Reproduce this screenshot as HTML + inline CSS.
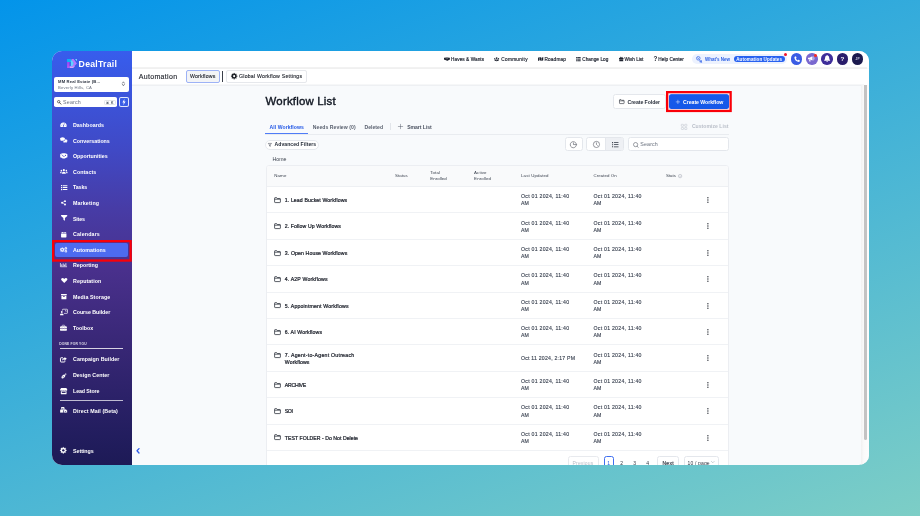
<!DOCTYPE html>
<html><head><meta charset="utf-8"><title>Workflow List</title>
<style>
html,body{margin:0;padding:0;}
body{width:920px;height:516px;overflow:hidden;position:relative;font-family:"Liberation Sans",sans-serif;
background:linear-gradient(160deg,#0394EA 0%,#7DCEC6 100%);}
#win{position:absolute;left:51.5px;top:51px;width:817.3px;height:413.6px;border-radius:10px;overflow:hidden;background:#F8FAFC;}
#pg{position:absolute;left:-51.5px;top:-51px;width:920px;height:516px;will-change:transform;filter:blur(0.3px);}
#pg div,#pg span,#pg svg{position:absolute;box-sizing:border-box;}
#pg span{white-space:nowrap;display:block;}
#pg svg{overflow:visible;display:block;}
</style></head>
<body>
<div id="win"><div id="pg">
<div style="left:51.00px;top:51.00px;width:81.00px;height:414.00px;background:linear-gradient(180deg,#375DED 0%,#4049C5 24%,#473CA6 38%,#49308C 53%,#3A2878 69%,#221D5E 93%,#1D1A56 100%);"></div>
<div style="left:132.00px;top:51.00px;width:737.00px;height:17.00px;background:#fff;"></div>
<div style="left:132.00px;top:67.00px;width:735.00px;height:1.00px;background:#F2F2F2;"></div>
<div style="left:132.00px;top:68.00px;width:735.00px;height:1.00px;background:#F0F0F0;"></div>
<div style="left:132.00px;top:69.00px;width:737.00px;height:16.00px;background:#fff;"></div>
<div style="left:132.00px;top:84.00px;width:732.00px;height:1.00px;background:#F6F7F8;"></div>
<div style="left:132.00px;top:85.00px;width:732.00px;height:1.00px;background:#EEF0F3;"></div>
<div style="left:861.00px;top:85.00px;width:8.00px;height:380.00px;background:linear-gradient(90deg,#F1F1F1 0%,#FAFAFA 35%,#FDFDFD 100%);"></div>
<div style="left:864.00px;top:85.20px;width:3.00px;height:354.60px;background:#C3C3C3;border-radius:0 0 1.5px 1.5px;"></div>
<div style="left:265.50px;top:164.60px;width:463.00px;height:305.40px;background:#fff;border:1px solid #ECEEF2;border-radius:3px;"></div>
<div style="left:266.50px;top:165.60px;width:461.00px;height:20.40px;background:#F9FAFB;border-radius:2px 2px 0 0;"></div>
<div style="left:266.50px;top:186.00px;width:461.00px;height:1.00px;background:#EEF0F3;"></div>
<div style="left:266.50px;top:212.00px;width:461.00px;height:1.00px;background:#F0F2F5;"></div>
<div style="left:266.50px;top:239.00px;width:461.00px;height:1.00px;background:#F0F2F5;"></div>
<div style="left:266.50px;top:265.00px;width:461.00px;height:1.00px;background:#F0F2F5;"></div>
<div style="left:266.50px;top:292.00px;width:461.00px;height:1.00px;background:#F0F2F5;"></div>
<div style="left:266.50px;top:318.00px;width:461.00px;height:1.00px;background:#F0F2F5;"></div>
<div style="left:266.50px;top:344.00px;width:461.00px;height:1.00px;background:#F0F2F5;"></div>
<div style="left:266.50px;top:371.00px;width:461.00px;height:1.00px;background:#F0F2F5;"></div>
<div style="left:266.50px;top:397.00px;width:461.00px;height:1.00px;background:#F0F2F5;"></div>
<div style="left:266.50px;top:424.00px;width:461.00px;height:1.00px;background:#F0F2F5;"></div>
<div style="left:266.50px;top:450.00px;width:461.00px;height:1.00px;background:#F0F2F5;"></div>
<svg style="left:66.90px;top:58.90px;" width="10.00" height="9.20" viewBox="0 0 100 92">
<defs><linearGradient id="lg1" x1="0" y1="0" x2="0" y2="1"><stop offset="0" stop-color="#A040F8"/><stop offset="1" stop-color="#B85CF2"/></linearGradient></defs>
<rect x="0" y="0" width="40" height="30" fill="#0AB2F6"/>
<rect x="1" y="30" width="24" height="60" fill="url(#lg1)"/>
<path d="M38 12 H60 L68 40 V70 H38 Z" fill="#62D0FF"/>
<path d="M42 0 H66 L99 46 L68 78 L54 64 L70 46 Z" fill="#B27AFF"/>
<path d="M80 0 H100 V22 Z" fill="#6FD6FF"/>
<path d="M26 72 H80 L62 90 H26 Z" fill="#D6A0FF"/>
</svg>
<span style="left:78.60px;top:59px;font-size:8.7px;line-height:10px;color:#fff;font-weight:700;letter-spacing:0.260px;">DealTrail</span>
<div style="left:54.20px;top:76.70px;width:74.80px;height:14.90px;background:#fff;border-radius:2px;"></div>
<span style="left:58.10px;top:79px;font-size:4.15px;line-height:5px;color:#2D3340;font-weight:700;letter-spacing:0.144px;">MM Real Estate (B...</span>
<span style="left:58.10px;top:85px;font-size:4.2px;line-height:5px;color:#6B7280;letter-spacing:0.163px;">Beverly Hills, CA</span>
<svg style="left:121.90px;top:80.90px;" width="2.80" height="5.60" viewBox="0 0 28 56"><path d="M4 22 L14 8 L24 22 M4 34 L14 48 L24 34" fill="none" stroke="#3A404C" stroke-width="6" stroke-linecap="round" stroke-linejoin="round"/></svg>
<div style="left:54.20px;top:97.30px;width:62.80px;height:10.00px;background:#fff;border-radius:1.8px;"></div>
<svg style="left:56.50px;top:100.00px;" width="4.40" height="4.60" viewBox="0 0 44 46"><circle cx="17" cy="17" r="12" fill="none" stroke="#333" stroke-width="7"/><path d="M26 27 L40 42" stroke="#333" stroke-width="8" stroke-linecap="round"/></svg>
<span style="left:63.00px;top:99px;font-size:5.3px;line-height:6px;color:#6B7280;letter-spacing:0.201px;">Search</span>
<div style="left:103.50px;top:99.70px;width:12.20px;height:5.60px;background:#fff;border:1px solid #E3E5E9;border-radius:1.2px;"></div>
<span style="left:105.70px;top:101px;font-size:3.4px;line-height:4px;color:#4B5563;font-weight:700;letter-spacing:0.747px;">&#8984; K</span>
<div style="left:118.80px;top:97.30px;width:10.20px;height:10.00px;background:#3A5EE6;border:1px solid rgba(255,255,255,0.85);border-radius:2px;"></div>
<svg style="left:121.90px;top:99.30px;" width="4.00" height="6.20" viewBox="0 0 40 62"><path d="M24 0 L4 34 H18 L12 62 L36 24 H22 Z" fill="#fff"/></svg>
<svg style="left:52.00px;top:240.20px;" width="79.80" height="21.70" viewBox="0 0 79.8 21.7"><rect x="1.15" y="1.15" width="77.5" height="19.4" fill="none" stroke="#FA0008" stroke-width="2.3"/></svg>
<div style="left:54.70px;top:243.00px;width:73.60px;height:14.20px;background:#4D6BF0;border-radius:2px;"></div>
<span style="left:73.00px;top:122px;font-size:5.3px;line-height:6px;color:#fff;font-weight:700;letter-spacing:0.042px;">Dashboards</span>
<span style="left:73.00px;top:138px;font-size:5.3px;line-height:6px;color:#fff;font-weight:700;">Conversations</span>
<span style="left:73.00px;top:153px;font-size:5.3px;line-height:6px;color:#fff;font-weight:700;letter-spacing:-0.011px;">Opportunities</span>
<span style="left:73.00px;top:169px;font-size:5.3px;line-height:6px;color:#fff;font-weight:700;letter-spacing:0.075px;">Contacts</span>
<span style="left:73.00px;top:184px;font-size:5.3px;line-height:6px;color:#fff;font-weight:700;letter-spacing:-0.110px;">Tasks</span>
<span style="left:73.00px;top:200px;font-size:5.3px;line-height:6px;color:#fff;font-weight:700;letter-spacing:0.121px;">Marketing</span>
<span style="left:73.00px;top:216px;font-size:5.3px;line-height:6px;color:#fff;font-weight:700;letter-spacing:-0.193px;">Sites</span>
<span style="left:73.00px;top:231px;font-size:5.3px;line-height:6px;color:#fff;font-weight:700;letter-spacing:0.147px;">Calendars</span>
<span style="left:73.00px;top:247px;font-size:5.3px;line-height:6px;color:#fff;font-weight:700;letter-spacing:0.042px;">Automations</span>
<span style="left:73.00px;top:262px;font-size:5.3px;line-height:6px;color:#fff;font-weight:700;letter-spacing:-0.014px;">Reporting</span>
<span style="left:73.00px;top:278px;font-size:5.3px;line-height:6px;color:#fff;font-weight:700;letter-spacing:0.059px;">Reputation</span>
<span style="left:73.00px;top:294px;font-size:5.3px;line-height:6px;color:#fff;font-weight:700;letter-spacing:0.082px;">Media Storage</span>
<span style="left:73.00px;top:309px;font-size:5.3px;line-height:6px;color:#fff;font-weight:700;letter-spacing:-0.059px;">Course Builder</span>
<span style="left:73.00px;top:325px;font-size:5.3px;line-height:6px;color:#fff;font-weight:700;letter-spacing:-0.017px;">Toolbox</span>
<span style="left:73.00px;top:356px;font-size:5.3px;line-height:6px;color:#fff;font-weight:700;letter-spacing:0.065px;">Campaign Builder</span>
<span style="left:73.00px;top:372px;font-size:5.3px;line-height:6px;color:#fff;font-weight:700;letter-spacing:0.032px;">Design Center</span>
<span style="left:73.00px;top:388px;font-size:5.3px;line-height:6px;color:#fff;font-weight:700;letter-spacing:-0.097px;">Lead Store</span>
<span style="left:73.00px;top:408px;font-size:5.3px;line-height:6px;color:#fff;font-weight:700;letter-spacing:0.095px;">Direct Mail (Beta)</span>
<span style="left:73.00px;top:448px;font-size:5.3px;line-height:6px;color:#fff;font-weight:700;letter-spacing:-0.029px;">Settings</span>
<span style="left:59.20px;top:342px;font-size:3.3px;line-height:4px;color:rgba(255,255,255,0.82);font-weight:700;letter-spacing:0.181px;">DONE FOR YOU</span>
<div style="left:59.60px;top:348.00px;width:63.70px;height:1.00px;background:rgba(255,255,255,0.8);"></div>
<div style="left:59.60px;top:400.00px;width:63.70px;height:1.00px;background:rgba(255,255,255,0.7);"></div>
<svg style="left:135.90px;top:447.90px;" width="4.00" height="5.60" viewBox="0 0 40 56"><path d="M30 6 L10 28 L30 50" fill="none" stroke="#2F5BEA" stroke-width="13" stroke-linecap="round" stroke-linejoin="round"/></svg>
<span style="left:451.10px;top:57px;font-size:4.7px;line-height:5px;color:#1F2430;letter-spacing:0.072px;-webkit-text-stroke:0.18px #1F2430;">Haves &amp; Wants</span>
<span style="left:501.30px;top:57px;font-size:4.7px;line-height:5px;color:#1F2430;letter-spacing:0.312px;-webkit-text-stroke:0.18px #1F2430;">Community</span>
<span style="left:544.40px;top:57px;font-size:4.7px;line-height:5px;color:#1F2430;letter-spacing:0.195px;-webkit-text-stroke:0.18px #1F2430;">Roadmap</span>
<span style="left:582.20px;top:57px;font-size:4.7px;line-height:5px;color:#1F2430;letter-spacing:0.073px;-webkit-text-stroke:0.18px #1F2430;">Change Log</span>
<span style="left:624.50px;top:57px;font-size:4.7px;line-height:5px;color:#1F2430;letter-spacing:-0.014px;-webkit-text-stroke:0.18px #1F2430;">Wish List</span>
<span style="left:658.30px;top:57px;font-size:4.7px;line-height:5px;color:#1F2430;letter-spacing:0.048px;-webkit-text-stroke:0.18px #1F2430;">Help Center</span>
<div style="left:691.80px;top:53.80px;width:95.00px;height:10.30px;background:#EDF2FE;border-radius:5.2px;"></div>
<span style="left:705.00px;top:57px;font-size:4.5px;line-height:5px;color:#2B5FE3;font-weight:700;letter-spacing:-0.009px;">What's New</span>
<div style="left:733.50px;top:55.70px;width:51.70px;height:6.80px;background:#2761F0;border-radius:3.4px;"></div>
<span style="left:736.20px;top:57px;font-size:4.5px;line-height:5px;color:#fff;font-weight:700;letter-spacing:0.105px;">Automation Updates</span>
<div style="left:784.30px;top:52.70px;width:3.00px;height:3.00px;background:#F0142B;border-radius:50%;"></div>
<div style="left:790.80px;top:53.05px;width:11.50px;height:11.50px;background:#3A5CE4;border-radius:50%;"></div>
<div style="left:806.05px;top:53.05px;width:11.50px;height:11.50px;background:#7A68CF;border-radius:50%;"></div>
<div style="left:821.30px;top:53.05px;width:11.50px;height:11.50px;background:#3E2E9A;border-radius:50%;"></div>
<div style="left:836.55px;top:53.05px;width:11.50px;height:11.50px;background:#2A1D6B;border-radius:50%;"></div>
<div style="left:851.85px;top:53.05px;width:11.50px;height:11.50px;background:#1C1A4E;border-radius:50%;"></div>
<div style="left:813.65px;top:53.55px;width:3.70px;height:3.70px;background:#FF2A1F;border-radius:50%;"></div>
<span style="left:840.50px;top:55px;font-size:6.2px;line-height:7px;color:#fff;font-weight:700;">?</span>
<span style="left:855.60px;top:57px;font-size:3.2px;line-height:4px;color:#C9C9E2;font-weight:700;letter-spacing:0.194px;">JP</span>
<span style="left:138.70px;top:73px;font-size:7.0px;line-height:7px;color:#23262E;letter-spacing:0.331px;-webkit-text-stroke:0.12px #23262E;">Automation</span>
<div style="left:185.80px;top:69.80px;width:33.80px;height:12.80px;background:#F3F4F6;border:1px solid #9DB2F6;border-radius:2px;"></div>
<span style="left:189.90px;top:73px;font-size:5.2px;line-height:6px;color:#23262E;letter-spacing:0.196px;-webkit-text-stroke:0.12px #23262E;">Workflows</span>
<div style="left:222.40px;top:71.20px;width:1.00px;height:10.40px;background:#3A3F49;"></div>
<div style="left:226.20px;top:69.80px;width:80.40px;height:12.80px;background:#fff;border:1px solid #E6E8EC;border-radius:2px;"></div>
<span style="left:239.00px;top:73px;font-size:5.2px;line-height:6px;color:#23262E;letter-spacing:0.224px;-webkit-text-stroke:0.12px #23262E;">Global Workflow Settings</span>
<span style="left:265.60px;top:95px;font-size:11.4px;line-height:12px;color:#111722;letter-spacing:0.207px;-webkit-text-stroke:0.4px #111722;">Workflow List</span>
<div style="left:613.40px;top:94.30px;width:52.70px;height:14.90px;background:#fff;border:1px solid #E4E7EC;border-radius:2.5px;"></div>
<span style="left:627.50px;top:99px;font-size:5.2px;line-height:6px;color:#2B313D;font-weight:700;letter-spacing:-0.071px;">Create Folder</span>
<svg style="left:666.00px;top:91.10px;" width="65.80" height="21.10" viewBox="0 0 65.8 21.1"><rect x="1.15" y="1.15" width="63.5" height="18.8" fill="none" stroke="#FA0008" stroke-width="2.3"/></svg>
<div style="left:668.90px;top:94.10px;width:60.20px;height:14.80px;background:linear-gradient(180deg,#3F86F4 0%,#1659EA 9%,#1558E8 100%);border-radius:2.5px;"></div>
<span style="left:683.00px;top:99px;font-size:5.2px;line-height:6px;color:#fff;font-weight:700;letter-spacing:-0.039px;">Create Workflow</span>
<div style="left:265.30px;top:133.50px;width:463.30px;height:1.00px;background:#E9ECF0;"></div>
<div style="left:265.30px;top:132.60px;width:43.00px;height:1.40px;background:#4F7CF7;"></div>
<span style="left:269.50px;top:124px;font-size:5.1px;line-height:6px;color:#2257E6;font-weight:700;letter-spacing:0.067px;">All Workflows</span>
<span style="left:312.80px;top:124px;font-size:5.1px;line-height:6px;color:#5B6270;font-weight:700;letter-spacing:0.060px;">Needs Review (0)</span>
<span style="left:364.50px;top:124px;font-size:5.1px;line-height:6px;color:#5B6270;font-weight:700;letter-spacing:0.016px;">Deleted</span>
<div style="left:390.30px;top:123.20px;width:1.00px;height:7.20px;background:#E2E5EA;"></div>
<span style="left:407.20px;top:124px;font-size:5.1px;line-height:6px;color:#4A5160;font-weight:700;letter-spacing:-0.036px;">Smart List</span>
<span style="left:691.90px;top:123px;font-size:5.1px;line-height:6px;color:#B9BEC8;font-weight:700;letter-spacing:0.028px;">Customize List</span>
<div style="left:265.30px;top:139.70px;width:54.10px;height:9.90px;background:#fff;border:1px solid #E6E9EE;border-radius:5px;"></div>
<span style="left:274.60px;top:141px;font-size:5.1px;line-height:6px;color:#1F2633;font-weight:700;letter-spacing:0.030px;">Advanced Filters</span>
<div style="left:564.50px;top:137.20px;width:18.20px;height:14.30px;background:#fff;border:1px solid #E4E7EC;border-radius:2.5px;"></div>
<div style="left:586.40px;top:137.20px;width:38.10px;height:14.30px;background:#fff;border:1px solid #E4E7EC;border-radius:2.5px;"></div>
<div style="left:605.40px;top:138.20px;width:18.10px;height:12.30px;background:#EEF0F4;border-left:1px solid #E4E7EC;border-radius:0 1.5px 1.5px 0;"></div>
<div style="left:628.10px;top:137.20px;width:100.50px;height:14.30px;background:#fff;border:1px solid #E4E7EC;border-radius:2.5px;"></div>
<span style="left:640.30px;top:141px;font-size:5.3px;line-height:6px;color:#69707D;letter-spacing:0.141px;">Search</span>
<span style="left:272.60px;top:156px;font-size:5.2px;line-height:6px;color:#3A404C;letter-spacing:-0.015px;">Home</span>
<span style="left:274.20px;top:173px;font-size:4.4px;line-height:5px;color:#3C4350;letter-spacing:0.160px;">Name</span>
<span style="left:395.00px;top:173px;font-size:4.4px;line-height:5px;color:#3C4350;letter-spacing:0.069px;">Status</span>
<span style="left:430.30px;top:170px;font-size:4.4px;line-height:5px;color:#3C4350;letter-spacing:0.08px;">Total</span>
<span style="left:430.30px;top:176px;font-size:4.4px;line-height:5px;color:#3C4350;letter-spacing:0.056px;">Enrolled</span>
<span style="left:474.10px;top:170px;font-size:4.4px;line-height:5px;color:#3C4350;letter-spacing:0.08px;">Active</span>
<span style="left:474.10px;top:176px;font-size:4.4px;line-height:5px;color:#3C4350;letter-spacing:0.113px;">Enrolled</span>
<span style="left:521.00px;top:173px;font-size:4.4px;line-height:5px;color:#3C4350;letter-spacing:0.125px;">Last Updated</span>
<span style="left:593.50px;top:173px;font-size:4.4px;line-height:5px;color:#3C4350;letter-spacing:0.066px;">Created On</span>
<span style="left:666.00px;top:173px;font-size:4.4px;line-height:5px;color:#3C4350;letter-spacing:-0.029px;">Stats</span>
<svg style="left:678.00px;top:173.50px;" width="4.20" height="4.20" viewBox="0 0 42 42"><circle cx="21" cy="21" r="17" fill="none" stroke="#8A919E" stroke-width="4"/><path d="M21 19 V30 M21 12 V14" stroke="#8A919E" stroke-width="4"/></svg>
<svg style="left:274.30px;top:196.70px;" width="7.00" height="6.20" viewBox="0 0 70 62"><path d="M6 50 V12 Q6 6 12 6 H26 L33 15 H58 Q64 15 64 21 V50 Q64 56 58 56 H12 Q6 56 6 50 Z M6 22 H64" fill="none" stroke="#262B36" stroke-width="7.5" stroke-linejoin="round"/></svg>
<span style="left:284.80px;top:197px;font-size:5.2px;line-height:6px;color:#20242E;letter-spacing:0.105px;-webkit-text-stroke:0.22px #20242E;">1. Lead Bucket Workflows</span>
<span style="left:521.00px;top:193px;font-size:5.2px;line-height:6px;color:#394150;letter-spacing:0.256px;-webkit-text-stroke:0.12px #394150;">Oct 01 2024, 11:40</span>
<span style="left:521.00px;top:200px;font-size:5.2px;line-height:6px;color:#394150;letter-spacing:-0.081px;-webkit-text-stroke:0.12px #394150;">AM</span>
<span style="left:593.50px;top:193px;font-size:5.2px;line-height:6px;color:#394150;letter-spacing:0.250px;-webkit-text-stroke:0.12px #394150;">Oct 01 2024, 11:40</span>
<span style="left:593.50px;top:200px;font-size:5.2px;line-height:6px;color:#394150;letter-spacing:-0.081px;-webkit-text-stroke:0.12px #394150;">AM</span>
<svg style="left:706.60px;top:197.00px;" width="1.80" height="6.00" viewBox="0 0 18 60"><g fill="#1C2029"><circle cx="9" cy="7.5" r="6.4"/><circle cx="9" cy="30" r="6.4"/><circle cx="9" cy="52.5" r="6.4"/></g></svg>
<svg style="left:274.30px;top:223.10px;" width="7.00" height="6.20" viewBox="0 0 70 62"><path d="M6 50 V12 Q6 6 12 6 H26 L33 15 H58 Q64 15 64 21 V50 Q64 56 58 56 H12 Q6 56 6 50 Z M6 22 H64" fill="none" stroke="#262B36" stroke-width="7.5" stroke-linejoin="round"/></svg>
<span style="left:284.80px;top:223px;font-size:5.2px;line-height:6px;color:#20242E;letter-spacing:0.095px;-webkit-text-stroke:0.22px #20242E;">2. Follow Up Workflows</span>
<span style="left:521.00px;top:220px;font-size:5.2px;line-height:6px;color:#394150;letter-spacing:0.256px;-webkit-text-stroke:0.12px #394150;">Oct 01 2024, 11:40</span>
<span style="left:521.00px;top:227px;font-size:5.2px;line-height:6px;color:#394150;letter-spacing:-0.081px;-webkit-text-stroke:0.12px #394150;">AM</span>
<span style="left:593.50px;top:220px;font-size:5.2px;line-height:6px;color:#394150;letter-spacing:0.250px;-webkit-text-stroke:0.12px #394150;">Oct 01 2024, 11:40</span>
<span style="left:593.50px;top:227px;font-size:5.2px;line-height:6px;color:#394150;letter-spacing:-0.081px;-webkit-text-stroke:0.12px #394150;">AM</span>
<svg style="left:706.60px;top:223.40px;" width="1.80" height="6.00" viewBox="0 0 18 60"><g fill="#1C2029"><circle cx="9" cy="7.5" r="6.4"/><circle cx="9" cy="30" r="6.4"/><circle cx="9" cy="52.5" r="6.4"/></g></svg>
<svg style="left:274.30px;top:249.50px;" width="7.00" height="6.20" viewBox="0 0 70 62"><path d="M6 50 V12 Q6 6 12 6 H26 L33 15 H58 Q64 15 64 21 V50 Q64 56 58 56 H12 Q6 56 6 50 Z M6 22 H64" fill="none" stroke="#262B36" stroke-width="7.5" stroke-linejoin="round"/></svg>
<span style="left:284.80px;top:250px;font-size:5.2px;line-height:6px;color:#20242E;letter-spacing:0.106px;-webkit-text-stroke:0.22px #20242E;">3. Open House Workflows</span>
<span style="left:521.00px;top:246px;font-size:5.2px;line-height:6px;color:#394150;letter-spacing:0.256px;-webkit-text-stroke:0.12px #394150;">Oct 01 2024, 11:40</span>
<span style="left:521.00px;top:253px;font-size:5.2px;line-height:6px;color:#394150;letter-spacing:-0.081px;-webkit-text-stroke:0.12px #394150;">AM</span>
<span style="left:593.50px;top:246px;font-size:5.2px;line-height:6px;color:#394150;letter-spacing:0.250px;-webkit-text-stroke:0.12px #394150;">Oct 01 2024, 11:40</span>
<span style="left:593.50px;top:253px;font-size:5.2px;line-height:6px;color:#394150;letter-spacing:-0.081px;-webkit-text-stroke:0.12px #394150;">AM</span>
<svg style="left:706.60px;top:249.80px;" width="1.80" height="6.00" viewBox="0 0 18 60"><g fill="#1C2029"><circle cx="9" cy="7.5" r="6.4"/><circle cx="9" cy="30" r="6.4"/><circle cx="9" cy="52.5" r="6.4"/></g></svg>
<svg style="left:274.30px;top:275.90px;" width="7.00" height="6.20" viewBox="0 0 70 62"><path d="M6 50 V12 Q6 6 12 6 H26 L33 15 H58 Q64 15 64 21 V50 Q64 56 58 56 H12 Q6 56 6 50 Z M6 22 H64" fill="none" stroke="#262B36" stroke-width="7.5" stroke-linejoin="round"/></svg>
<span style="left:284.80px;top:276px;font-size:5.2px;line-height:6px;color:#20242E;letter-spacing:0.149px;-webkit-text-stroke:0.22px #20242E;">4. A2P Workflows</span>
<span style="left:521.00px;top:272px;font-size:5.2px;line-height:6px;color:#394150;letter-spacing:0.256px;-webkit-text-stroke:0.12px #394150;">Oct 01 2024, 11:40</span>
<span style="left:521.00px;top:280px;font-size:5.2px;line-height:6px;color:#394150;letter-spacing:-0.081px;-webkit-text-stroke:0.12px #394150;">AM</span>
<span style="left:593.50px;top:272px;font-size:5.2px;line-height:6px;color:#394150;letter-spacing:0.250px;-webkit-text-stroke:0.12px #394150;">Oct 01 2024, 11:40</span>
<span style="left:593.50px;top:280px;font-size:5.2px;line-height:6px;color:#394150;letter-spacing:-0.081px;-webkit-text-stroke:0.12px #394150;">AM</span>
<svg style="left:706.60px;top:276.20px;" width="1.80" height="6.00" viewBox="0 0 18 60"><g fill="#1C2029"><circle cx="9" cy="7.5" r="6.4"/><circle cx="9" cy="30" r="6.4"/><circle cx="9" cy="52.5" r="6.4"/></g></svg>
<svg style="left:274.30px;top:302.30px;" width="7.00" height="6.20" viewBox="0 0 70 62"><path d="M6 50 V12 Q6 6 12 6 H26 L33 15 H58 Q64 15 64 21 V50 Q64 56 58 56 H12 Q6 56 6 50 Z M6 22 H64" fill="none" stroke="#262B36" stroke-width="7.5" stroke-linejoin="round"/></svg>
<span style="left:284.80px;top:303px;font-size:5.2px;line-height:6px;color:#20242E;letter-spacing:0.166px;-webkit-text-stroke:0.22px #20242E;">5. Appointment Workflows</span>
<span style="left:521.00px;top:299px;font-size:5.2px;line-height:6px;color:#394150;letter-spacing:0.256px;-webkit-text-stroke:0.12px #394150;">Oct 01 2024, 11:40</span>
<span style="left:521.00px;top:306px;font-size:5.2px;line-height:6px;color:#394150;letter-spacing:-0.081px;-webkit-text-stroke:0.12px #394150;">AM</span>
<span style="left:593.50px;top:299px;font-size:5.2px;line-height:6px;color:#394150;letter-spacing:0.250px;-webkit-text-stroke:0.12px #394150;">Oct 01 2024, 11:40</span>
<span style="left:593.50px;top:306px;font-size:5.2px;line-height:6px;color:#394150;letter-spacing:-0.081px;-webkit-text-stroke:0.12px #394150;">AM</span>
<svg style="left:706.60px;top:302.60px;" width="1.80" height="6.00" viewBox="0 0 18 60"><g fill="#1C2029"><circle cx="9" cy="7.5" r="6.4"/><circle cx="9" cy="30" r="6.4"/><circle cx="9" cy="52.5" r="6.4"/></g></svg>
<svg style="left:274.30px;top:328.70px;" width="7.00" height="6.20" viewBox="0 0 70 62"><path d="M6 50 V12 Q6 6 12 6 H26 L33 15 H58 Q64 15 64 21 V50 Q64 56 58 56 H12 Q6 56 6 50 Z M6 22 H64" fill="none" stroke="#262B36" stroke-width="7.5" stroke-linejoin="round"/></svg>
<span style="left:284.80px;top:329px;font-size:5.2px;line-height:6px;color:#20242E;letter-spacing:0.110px;-webkit-text-stroke:0.22px #20242E;">6. AI Workflows</span>
<span style="left:521.00px;top:325px;font-size:5.2px;line-height:6px;color:#394150;letter-spacing:0.256px;-webkit-text-stroke:0.12px #394150;">Oct 01 2024, 11:40</span>
<span style="left:521.00px;top:332px;font-size:5.2px;line-height:6px;color:#394150;letter-spacing:-0.081px;-webkit-text-stroke:0.12px #394150;">AM</span>
<span style="left:593.50px;top:325px;font-size:5.2px;line-height:6px;color:#394150;letter-spacing:0.250px;-webkit-text-stroke:0.12px #394150;">Oct 01 2024, 11:40</span>
<span style="left:593.50px;top:332px;font-size:5.2px;line-height:6px;color:#394150;letter-spacing:-0.081px;-webkit-text-stroke:0.12px #394150;">AM</span>
<svg style="left:706.60px;top:329.00px;" width="1.80" height="6.00" viewBox="0 0 18 60"><g fill="#1C2029"><circle cx="9" cy="7.5" r="6.4"/><circle cx="9" cy="30" r="6.4"/><circle cx="9" cy="52.5" r="6.4"/></g></svg>
<svg style="left:274.30px;top:351.60px;" width="7.00" height="6.20" viewBox="0 0 70 62"><path d="M6 50 V12 Q6 6 12 6 H26 L33 15 H58 Q64 15 64 21 V50 Q64 56 58 56 H12 Q6 56 6 50 Z M6 22 H64" fill="none" stroke="#262B36" stroke-width="7.5" stroke-linejoin="round"/></svg>
<span style="left:284.80px;top:352px;font-size:5.2px;line-height:6px;color:#20242E;letter-spacing:0.246px;-webkit-text-stroke:0.22px #20242E;">7. Agent-to-Agent Outreach</span>
<span style="left:284.80px;top:359px;font-size:5.2px;line-height:6px;color:#20242E;-webkit-text-stroke:0.22px #20242E;letter-spacing:0.1px;">Workflows</span>
<span style="left:521.00px;top:355px;font-size:5.2px;line-height:6px;color:#394150;letter-spacing:0.206px;-webkit-text-stroke:0.12px #394150;">Oct 11 2024, 2:17 PM</span>
<span style="left:593.50px;top:352px;font-size:5.2px;line-height:6px;color:#394150;letter-spacing:0.250px;-webkit-text-stroke:0.12px #394150;">Oct 01 2024, 11:40</span>
<span style="left:593.50px;top:359px;font-size:5.2px;line-height:6px;color:#394150;letter-spacing:-0.081px;-webkit-text-stroke:0.12px #394150;">AM</span>
<svg style="left:706.60px;top:355.40px;" width="1.80" height="6.00" viewBox="0 0 18 60"><g fill="#1C2029"><circle cx="9" cy="7.5" r="6.4"/><circle cx="9" cy="30" r="6.4"/><circle cx="9" cy="52.5" r="6.4"/></g></svg>
<svg style="left:274.30px;top:381.50px;" width="7.00" height="6.20" viewBox="0 0 70 62"><path d="M6 50 V12 Q6 6 12 6 H26 L33 15 H58 Q64 15 64 21 V50 Q64 56 58 56 H12 Q6 56 6 50 Z M6 22 H64" fill="none" stroke="#262B36" stroke-width="7.5" stroke-linejoin="round"/></svg>
<span style="left:284.80px;top:382px;font-size:5.2px;line-height:6px;color:#20242E;letter-spacing:-0.277px;-webkit-text-stroke:0.22px #20242E;">ARCHIVE</span>
<span style="left:521.00px;top:378px;font-size:5.2px;line-height:6px;color:#394150;letter-spacing:0.256px;-webkit-text-stroke:0.12px #394150;">Oct 01 2024, 11:40</span>
<span style="left:521.00px;top:385px;font-size:5.2px;line-height:6px;color:#394150;letter-spacing:-0.081px;-webkit-text-stroke:0.12px #394150;">AM</span>
<span style="left:593.50px;top:378px;font-size:5.2px;line-height:6px;color:#394150;letter-spacing:0.250px;-webkit-text-stroke:0.12px #394150;">Oct 01 2024, 11:40</span>
<span style="left:593.50px;top:385px;font-size:5.2px;line-height:6px;color:#394150;letter-spacing:-0.081px;-webkit-text-stroke:0.12px #394150;">AM</span>
<svg style="left:706.60px;top:381.80px;" width="1.80" height="6.00" viewBox="0 0 18 60"><g fill="#1C2029"><circle cx="9" cy="7.5" r="6.4"/><circle cx="9" cy="30" r="6.4"/><circle cx="9" cy="52.5" r="6.4"/></g></svg>
<svg style="left:274.30px;top:407.90px;" width="7.00" height="6.20" viewBox="0 0 70 62"><path d="M6 50 V12 Q6 6 12 6 H26 L33 15 H58 Q64 15 64 21 V50 Q64 56 58 56 H12 Q6 56 6 50 Z M6 22 H64" fill="none" stroke="#262B36" stroke-width="7.5" stroke-linejoin="round"/></svg>
<span style="left:284.80px;top:408px;font-size:5.2px;line-height:6px;color:#20242E;letter-spacing:-0.419px;-webkit-text-stroke:0.22px #20242E;">SOI</span>
<span style="left:521.00px;top:404px;font-size:5.2px;line-height:6px;color:#394150;letter-spacing:0.256px;-webkit-text-stroke:0.12px #394150;">Oct 01 2024, 11:40</span>
<span style="left:521.00px;top:412px;font-size:5.2px;line-height:6px;color:#394150;letter-spacing:-0.081px;-webkit-text-stroke:0.12px #394150;">AM</span>
<span style="left:593.50px;top:404px;font-size:5.2px;line-height:6px;color:#394150;letter-spacing:0.250px;-webkit-text-stroke:0.12px #394150;">Oct 01 2024, 11:40</span>
<span style="left:593.50px;top:412px;font-size:5.2px;line-height:6px;color:#394150;letter-spacing:-0.081px;-webkit-text-stroke:0.12px #394150;">AM</span>
<svg style="left:706.60px;top:408.20px;" width="1.80" height="6.00" viewBox="0 0 18 60"><g fill="#1C2029"><circle cx="9" cy="7.5" r="6.4"/><circle cx="9" cy="30" r="6.4"/><circle cx="9" cy="52.5" r="6.4"/></g></svg>
<svg style="left:274.30px;top:434.30px;" width="7.00" height="6.20" viewBox="0 0 70 62"><path d="M6 50 V12 Q6 6 12 6 H26 L33 15 H58 Q64 15 64 21 V50 Q64 56 58 56 H12 Q6 56 6 50 Z M6 22 H64" fill="none" stroke="#262B36" stroke-width="7.5" stroke-linejoin="round"/></svg>
<span style="left:284.80px;top:435px;font-size:5.2px;line-height:6px;color:#20242E;letter-spacing:0.014px;-webkit-text-stroke:0.22px #20242E;">TEST FOLDER - Do Not Delete</span>
<span style="left:521.00px;top:431px;font-size:5.2px;line-height:6px;color:#394150;letter-spacing:0.256px;-webkit-text-stroke:0.12px #394150;">Oct 01 2024, 11:40</span>
<span style="left:521.00px;top:438px;font-size:5.2px;line-height:6px;color:#394150;letter-spacing:-0.081px;-webkit-text-stroke:0.12px #394150;">AM</span>
<span style="left:593.50px;top:431px;font-size:5.2px;line-height:6px;color:#394150;letter-spacing:0.250px;-webkit-text-stroke:0.12px #394150;">Oct 01 2024, 11:40</span>
<span style="left:593.50px;top:438px;font-size:5.2px;line-height:6px;color:#394150;letter-spacing:-0.081px;-webkit-text-stroke:0.12px #394150;">AM</span>
<svg style="left:706.60px;top:434.60px;" width="1.80" height="6.00" viewBox="0 0 18 60"><g fill="#1C2029"><circle cx="9" cy="7.5" r="6.4"/><circle cx="9" cy="30" r="6.4"/><circle cx="9" cy="52.5" r="6.4"/></g></svg>
<div style="left:567.80px;top:456.00px;width:30.90px;height:14.00px;background:#fff;border:1px solid #E8EAEE;border-radius:2.5px;"></div>
<span style="left:572.60px;top:460px;font-size:5.0px;line-height:6px;color:#B7BCC6;letter-spacing:0.164px;">Previous</span>
<div style="left:603.50px;top:456.00px;width:10.40px;height:14.00px;background:#fff;border:1px solid #3F6FF0;border-radius:2.5px;"></div>
<span style="left:607.30px;top:460px;font-size:5.0px;line-height:6px;color:#2257E6;">1</span>
<span style="left:620.20px;top:460px;font-size:5.0px;line-height:6px;color:#2E3440;">2</span>
<span style="left:633.30px;top:460px;font-size:5.0px;line-height:6px;color:#2E3440;">3</span>
<span style="left:646.30px;top:460px;font-size:5.0px;line-height:6px;color:#2E3440;">4</span>
<div style="left:657.40px;top:456.00px;width:21.30px;height:14.00px;background:#fff;border:1px solid #E4E7EC;border-radius:2.5px;"></div>
<span style="left:662.40px;top:460px;font-size:5.0px;line-height:6px;color:#2E3440;letter-spacing:0.306px;-webkit-text-stroke:0.15px #2E3440;">Next</span>
<div style="left:683.50px;top:456.00px;width:35.80px;height:14.00px;background:#fff;border:1px solid #E4E7EC;border-radius:2.5px;"></div>
<span style="left:687.60px;top:460px;font-size:5.0px;line-height:6px;color:#2E3440;letter-spacing:0.143px;">10 / page</span>
<svg style="left:711.30px;top:461.20px;" width="3.60" height="2.40" viewBox="0 0 36 24"><path d="M4 4 L18 18 L32 4" fill="none" stroke="#9AA1AD" stroke-width="5" stroke-linecap="round"/></svg>
<svg style="left:60.20px;top:122.30px;" width="6.90" height="5.10" viewBox="0 0 70 52"><path d="M2 42 A33 36 0 0 1 68 42 Q68 51 60 51 H10 Q2 51 2 42 Z" fill="#fff"/><path d="M35 40 L44 16" stroke="#3F4DCB" stroke-width="6" stroke-linecap="round"/><circle cx="35" cy="40" r="6" fill="#3F4DCB"/><circle cx="15" cy="36" r="3.2" fill="#3F4DCB"/><circle cx="22" cy="21" r="3.2" fill="#3F4DCB"/><circle cx="55" cy="36" r="3.2" fill="#3F4DCB"/></svg>
<svg style="left:60.00px;top:137.30px;" width="7.50" height="6.10" viewBox="0 0 72 58"><path d="M24 2 C38 2 48 9 48 19 C48 29 38 36 24 36 C21 36 18 35.5 15 34.7 L4 39 L8 30 C3 27 0 23 0 19 C0 9 11 2 24 2 Z" fill="#fff"/><path d="M50 20 C62 21 72 28 72 37 C72 41 69 45 65 48 L68 57 L57 52.5 C54 53.5 51 54 48 54 C38 54 30 49 27 42 C40 40 50 32 50 20 Z" fill="#fff" stroke="#4149C6" stroke-width="3"/></svg>
<svg style="left:59.70px;top:153.10px;" width="7.60" height="5.60" viewBox="0 0 76 56"><path d="M2 14 Q2 8 10 8 L26 3 Q38 0 50 3 L66 8 Q74 8 74 14 V40 Q74 46 66 46 L48 54 Q38 58 28 54 L10 46 Q2 46 2 40 Z" fill="#fff"/><path d="M19 20 Q26 38 43 35" stroke="#4346BE" stroke-width="6.5" fill="none" stroke-linecap="round"/><circle cx="55" cy="24" r="5.5" fill="#4346BE"/></svg>
<svg style="left:60.00px;top:169.30px;" width="7.70" height="4.80" viewBox="0 0 78 50"><circle cx="39" cy="12" r="11" fill="#fff"/><circle cx="13" cy="16" r="8" fill="#fff"/><circle cx="65" cy="16" r="8" fill="#fff"/><path d="M18 48 Q18 28 39 28 Q60 28 60 48 Q60 50 56 50 H22 Q18 50 18 48 Z" fill="#fff"/><path d="M0 40 Q0 27 14 27 Q17 27 20 28 Q13 33 13 43 H3 Q0 43 0 40 Z M78 40 Q78 27 64 27 Q61 27 58 28 Q65 33 65 43 H75 Q78 43 78 40 Z" fill="#fff"/></svg>
<svg style="left:60.80px;top:184.80px;" width="6.40" height="5.20" viewBox="0 0 64 52"><rect x="0" y="0" width="12" height="13" rx="2" fill="#fff"/><rect x="0" y="19.5" width="12" height="13" rx="2" fill="#fff"/><rect x="0" y="39" width="12" height="13" rx="2" fill="#fff"/><rect x="18" y="1.5" width="46" height="10" rx="2" fill="#fff"/><rect x="18" y="21" width="46" height="10" rx="2" fill="#fff"/><rect x="18" y="40.5" width="46" height="10" rx="2" fill="#fff"/></svg>
<svg style="left:61.10px;top:200.30px;" width="5.10" height="5.60" viewBox="0 0 52 56"><path d="M12 28 L40 11 M12 28 L40 45" stroke="#fff" stroke-width="6"/><circle cx="11" cy="28" r="10" fill="#fff"/><circle cx="41" cy="11" r="10" fill="#fff"/><circle cx="41" cy="45" r="10" fill="#fff"/></svg>
<svg style="left:60.60px;top:215.10px;" width="6.30" height="5.80" viewBox="0 0 64 58"><path d="M5 0 H59 Q65 0 64 6 Q64 10 61 13 L40 31 V53 Q40 59 35 56 L27 50 Q24 48 24 44 V31 L3 13 Q0 10 0 6 Q-1 0 5 0 Z" fill="#fff"/></svg>
<svg style="left:61.10px;top:231.80px;" width="5.50" height="5.40" viewBox="0 0 56 56"><path d="M0 20 H56 V50 Q56 56 50 56 H6 Q0 56 0 50 Z" fill="#fff"/><path d="M0 16 V12 Q0 6 6 6 H50 Q56 6 56 12 V16 Z" fill="#fff"/><rect x="10" y="0" width="8" height="12" rx="2" fill="#fff"/><rect x="38" y="0" width="8" height="12" rx="2" fill="#fff"/></svg>
<svg style="left:60.00px;top:247.20px;" width="7.30" height="5.50" viewBox="0 0 73 55"><path d="M43.9 25.6 L43.9 30.4 L37.4 32.5 L36.0 35.7 L39.2 41.8 L35.8 45.2 L29.7 42.0 L26.5 43.4 L24.4 49.9 L19.6 49.9 L17.5 43.4 L14.3 42.0 L8.2 45.2 L4.8 41.8 L8.0 35.7 L6.6 32.5 L0.1 30.4 L0.1 25.6 L6.6 23.5 L8.0 20.3 L4.8 14.2 L8.2 10.8 L14.3 14.0 L17.5 12.6 L19.6 6.1 L24.4 6.1 L26.5 12.6 L29.7 14.0 L35.8 10.8 L39.2 14.2 L36.0 20.3 L37.4 23.5 Z" fill="#fff" stroke="#fff" stroke-width="2" stroke-linejoin="round"/><circle cx="22" cy="28" r="8" fill="#4A6CF2"/><path d="M70.9 11.1 L70.9 14.9 L66.4 16.3 L65.1 18.6 L66.1 23.2 L62.8 25.1 L59.3 21.9 L56.7 21.9 L53.2 25.1 L49.9 23.2 L50.9 18.6 L49.6 16.3 L45.1 14.9 L45.1 11.1 L49.6 9.7 L50.9 7.4 L49.9 2.8 L53.2 0.9 L56.7 4.1 L59.3 4.1 L62.8 0.9 L66.1 2.8 L65.1 7.4 L66.4 9.7 Z" fill="#fff" stroke="#fff" stroke-width="2" stroke-linejoin="round"/><circle cx="58" cy="13" r="4.5" fill="#4A6CF2"/><path d="M70.9 40.1 L70.9 43.9 L66.4 45.3 L65.1 47.6 L66.1 52.2 L62.8 54.1 L59.3 50.9 L56.7 50.9 L53.2 54.1 L49.9 52.2 L50.9 47.6 L49.6 45.3 L45.1 43.9 L45.1 40.1 L49.6 38.7 L50.9 36.4 L49.9 31.8 L53.2 29.9 L56.7 33.1 L59.3 33.1 L62.8 29.9 L66.1 31.8 L65.1 36.4 L66.4 38.7 Z" fill="#fff" stroke="#fff" stroke-width="2" stroke-linejoin="round"/><circle cx="58" cy="42" r="4.5" fill="#4A6CF2"/></svg>
<svg style="left:60.20px;top:263.40px;" width="7.10" height="4.30" viewBox="0 0 72 44"><path d="M4 0 V38 H72" stroke="#fff" stroke-width="7" fill="none" stroke-linejoin="round"/><rect x="14" y="14" width="8" height="18" fill="#fff"/><rect x="28" y="4" width="8" height="28" fill="#fff"/><rect x="42" y="16" width="8" height="16" fill="#fff"/><rect x="56" y="2" width="8" height="30" fill="#fff"/></svg>
<svg style="left:60.60px;top:278.40px;" width="6.50" height="5.10" viewBox="0 0 66 52"><path d="M33 52 L5 24 Q-3 14 4 5 Q13 -4 25 3 L33 10 L41 3 Q53 -4 62 5 Q69 14 61 24 Z" fill="#fff"/></svg>
<svg style="left:60.80px;top:293.90px;" width="5.80" height="5.20" viewBox="0 0 58 52"><rect x="0" y="0" width="58" height="13" rx="3" fill="#fff"/><path d="M4 17 H54 V47 Q54 52 49 52 H9 Q4 52 4 47 Z" fill="#fff"/><rect x="20" y="23" width="18" height="6" rx="2" fill="#45297F"/></svg>
<svg style="left:60.00px;top:309.00px;" width="7.70" height="6.60" viewBox="0 0 78 66"><path d="M24 8 Q24 2 30 2 H70 Q76 2 76 8 V38 Q76 44 70 44 H40 M24 8 V16" stroke="#fff" stroke-width="7" fill="none"/><path d="M50 16 L62 16 L62 28" stroke="#fff" stroke-width="6" fill="none"/><circle cx="18" cy="30" r="9" fill="#fff"/><path d="M0 58 Q0 44 18 44 Q36 44 36 58 Q36 64 30 64 H6 Q0 64 0 58 Z" fill="#fff"/></svg>
<svg style="left:60.20px;top:324.80px;" width="6.90" height="5.70" viewBox="0 0 70 58"><path d="M22 14 V8 Q22 2 28 2 H42 Q48 2 48 8 V14" stroke="#fff" stroke-width="6" fill="none"/><path d="M6 14 H64 L70 22 V32 H0 V22 Z" fill="#fff"/><path d="M0 37 H70 V52 Q70 58 64 58 H6 Q0 58 0 52 Z" fill="#fff"/><rect x="17" y="28" width="8" height="14" rx="2" fill="#fff" stroke="#38277A" stroke-width="2"/><rect x="45" y="28" width="8" height="14" rx="2" fill="#fff" stroke="#38277A" stroke-width="2"/></svg>
<svg style="left:60.20px;top:357.00px;" width="6.90" height="5.40" viewBox="0 0 70 56"><path d="M26 8 H10 Q4 8 4 14 V46 Q4 52 10 52 H44 Q50 52 50 46 V40" stroke="#fff" stroke-width="10" fill="none" stroke-linecap="round"/><path d="M46 0 L70 18 L46 36 V25 Q30 24 22 40 Q20 14 46 11 Z" fill="#fff"/></svg>
<svg style="left:60.80px;top:372.70px;" width="5.80" height="5.80" viewBox="0 0 58 58"><ellipse cx="24" cy="35" rx="24" ry="13.5" transform="rotate(-45 24 35)" fill="#fff"/><circle cx="22" cy="37" r="5.5" fill="#2F2470"/><path d="M48 0 L51 8 L58 11 L51 14 L48 22 L45 14 L38 11 L45 8 Z" fill="#fff"/></svg>
<svg style="left:60.00px;top:388.00px;" width="7.40" height="6.30" viewBox="0 0 74 64"><path d="M10 0 H64 L74 18 Q74 28 64 28 Q56 28 55 22 Q53 28 46 28 Q38 28 37 22 Q36 28 28 28 Q21 28 19 22 Q18 28 10 28 Q0 28 0 18 Z" fill="#fff"/><path d="M8 33 H66 V58 Q66 64 60 64 H14 Q8 64 8 58 Z" fill="#fff"/><rect x="18" y="38" width="38" height="12" fill="#2A2068"/></svg>
<svg style="left:60.10px;top:407.00px;" width="7.20" height="6.20" viewBox="0 0 72 62"><path d="M12 0 H38 L46 8 V34 H12 Z" fill="#fff"/><rect x="18" y="10" width="16" height="4" fill="#251E64"/><rect x="18" y="18" width="16" height="4" fill="#251E64"/><path d="M0 26 H26 Q34 26 34 34 V58 H6 Q0 58 0 52 Z" fill="#fff" stroke="#251E64" stroke-width="3"/><path d="M38 22 H58 L72 36 V52 Q72 58 66 58 H38 Z" fill="#fff" stroke="#251E64" stroke-width="3"/><circle cx="54" cy="44" r="5" fill="#251E64"/></svg>
<svg style="left:60.20px;top:447.20px;" width="6.60" height="6.70" viewBox="0 0 62 62"><path d="M60.8 27.7 L60.8 34.3 L53.1 37.4 L51.2 42.1 L54.4 49.8 L49.8 54.4 L42.1 51.2 L37.4 53.1 L34.3 60.8 L27.7 60.8 L24.6 53.1 L19.9 51.2 L12.2 54.4 L7.6 49.8 L10.8 42.1 L8.9 37.4 L1.2 34.3 L1.2 27.7 L8.9 24.6 L10.8 19.9 L7.6 12.2 L12.2 7.6 L19.9 10.8 L24.6 8.9 L27.7 1.2 L34.3 1.2 L37.4 8.9 L42.1 10.8 L49.8 7.6 L54.4 12.2 L51.2 19.9 L53.1 24.6 Z" fill="#fff" stroke="#fff" stroke-width="2" stroke-linejoin="round"/><circle cx="31" cy="31" r="11" fill="#1E1A58"/></svg>
<svg style="left:443.90px;top:57.00px;" width="5.90" height="4.00" viewBox="0 0 78 46"><path d="M0 6 H12 L22 2 H56 L66 6 H78 V34 H68 L50 45 Q42 48 34 44 L10 34 H0 Z" fill="#1F2430"/><path d="M22 12 L34 20 Q39 23 44 19 L52 12" stroke="#fff" stroke-width="4" fill="none" stroke-linecap="round"/></svg>
<svg style="left:494.40px;top:56.90px;" width="5.30" height="4.50" viewBox="0 0 78 60"><circle cx="39" cy="13" r="13" fill="#1F2430"/><circle cx="11" cy="20" r="9" fill="#1F2430"/><circle cx="67" cy="20" r="9" fill="#1F2430"/><path d="M2 38 Q2 32 8 32 H70 Q76 32 76 38 Q72 60 39 60 Q6 60 2 38 Z" fill="#1F2430"/><circle cx="39" cy="42" r="6" fill="#fff"/></svg>
<svg style="left:537.80px;top:57.00px;" width="5.30" height="4.00" viewBox="0 0 60 46"><path d="M0 8 L18 0 V38 L0 46 Z M22 0 L38 8 V46 L22 38 Z M42 8 L60 0 V38 L42 46 Z" fill="#1F2430"/></svg>
<svg style="left:576.10px;top:56.90px;" width="4.70" height="4.30" viewBox="0 0 46 42"><g fill="#3A3F4A"><rect x="0" y="0" width="9" height="11"/><rect x="12" y="0" width="34" height="11"/><rect x="0" y="15.5" width="9" height="11"/><rect x="12" y="15.5" width="34" height="11"/><rect x="0" y="31" width="9" height="11"/><rect x="12" y="31" width="34" height="11"/></g></svg>
<svg style="left:618.60px;top:56.90px;" width="4.50" height="4.40" viewBox="0 0 46 44"><path d="M0 11 H46 V22 H0 Z M3 24 H43 V44 H3 Z" fill="#1F2430"/><path d="M13 11 Q5 0 16 1 Q22 3 23 10 Q24 3 30 1 Q41 0 33 11" fill="#1F2430" stroke="#1F2430" stroke-width="4"/></svg>
<span style="left:653.40px;top:55px;font-size:6.4px;line-height:7px;color:#1F2430;font-weight:700;">?</span>
<svg style="left:695.80px;top:56.20px;" width="6.00" height="6.60" viewBox="0 0 60 66"><circle cx="23" cy="23" r="18" fill="none" stroke="#3565E8" stroke-width="7"/><path d="M15 15 L31 31 M31 15 L15 31" stroke="#3565E8" stroke-width="5"/><path d="M34 38 L54 62 M38 58 L54 62 L52 44" stroke="#3565E8" stroke-width="8" fill="none" stroke-linecap="round" stroke-linejoin="round"/></svg>
<svg style="left:793.60px;top:55.70px;" width="6.00" height="6.20" viewBox="0 0 60 62"><path d="M14 4 Q18 2 20 6 L25 17 Q26 20 23 22 L18 26 Q24 38 36 44 L40 39 Q42 36 45 37 L56 42 Q60 44 58 48 L56 56 Q55 60 50 60 Q30 58 16 44 Q4 30 4 12 Q4 8 8 7 Z" fill="#fff"/></svg>
<svg style="left:808.00px;top:56.00px;" width="7.20" height="5.80" viewBox="0 0 72 58"><path d="M0 18 H14 L44 2 V46 L14 32 H0 Z" fill="#fff"/><path d="M10 34 H22 L26 56 H14 Z" fill="#fff"/><path d="M50 14 Q60 24 50 34" stroke="#fff" stroke-width="5" fill="none" stroke-linecap="round"/><path d="M56 6 Q72 24 56 42" stroke="#fff" stroke-width="5" fill="none" stroke-linecap="round" opacity="0.9"/></svg>
<svg style="left:823.90px;top:55.30px;" width="6.30" height="7.00" viewBox="0 0 63 70"><path d="M31.5 0 Q36 0 36 5 Q52 9 52 28 Q52 44 61 52 Q64 58 58 58 H5 Q-1 58 2 52 Q11 44 11 28 Q11 9 27 5 Q27 0 31.5 0 Z" fill="#fff"/><path d="M22 62 H41 Q40 70 31.5 70 Q23 70 22 62 Z" fill="#fff"/></svg>
<svg style="left:230.60px;top:73.10px;" width="6.30" height="6.30" viewBox="0 0 62 62"><path d="M61.8 27.6 L61.8 34.4 L52.1 37.1 L50.3 41.6 L55.2 50.4 L50.4 55.2 L41.6 50.3 L37.1 52.1 L34.4 61.8 L27.6 61.8 L24.9 52.1 L20.4 50.3 L11.6 55.2 L6.8 50.4 L11.7 41.6 L9.9 37.1 L0.2 34.4 L0.2 27.6 L9.9 24.9 L11.7 20.4 L6.8 11.6 L11.6 6.8 L20.4 11.7 L24.9 9.9 L27.6 0.2 L34.4 0.2 L37.1 9.9 L41.6 11.7 L50.4 6.8 L55.2 11.6 L50.3 20.4 L52.1 24.9 Z" fill="#16191F" stroke="#16191F" stroke-width="2" stroke-linejoin="round"/><circle cx="31" cy="31" r="10.5" fill="#fff"/></svg>
<svg style="left:619.20px;top:99.20px;" width="5.60" height="5.20" viewBox="0 0 70 62"><path d="M6 50 V12 Q6 6 12 6 H26 L33 15 H58 Q64 15 64 21 V50 Q64 56 58 56 H12 Q6 56 6 50 Z M6 22 H64" fill="none" stroke="#262B36" stroke-width="7.5" stroke-linejoin="round"/></svg>
<svg style="left:675.60px;top:100.00px;" width="3.80" height="3.80" viewBox="0 0 38 38"><path d="M19 2 V36 M2 19 H36" stroke="#fff" stroke-width="4.5" stroke-linecap="round"/></svg>
<svg style="left:398.10px;top:124.30px;" width="5.00" height="5.00" viewBox="0 0 50 50"><path d="M25 3 V47 M3 25 H47" stroke="#4A5160" stroke-width="4.5" stroke-linecap="round"/></svg>
<svg style="left:680.50px;top:123.60px;" width="6.20" height="5.80" viewBox="0 0 62 58"><g fill="none" stroke="#B9BEC8" stroke-width="5"><rect x="3" y="3" width="22" height="20" rx="4"/><rect x="37" y="3" width="22" height="20" rx="4"/><rect x="3" y="35" width="22" height="20" rx="4"/><rect x="37" y="35" width="22" height="20" rx="4"/></g></svg>
<svg style="left:268.40px;top:142.70px;" width="3.80" height="3.80" viewBox="0 0 38 38"><path d="M3 4 H35 L23 19 V34 L15 30 V19 Z" fill="none" stroke="#1F2633" stroke-width="4.5" stroke-linejoin="round"/></svg>
<svg style="left:569.95px;top:140.85px;" width="6.90" height="6.90" viewBox="0 0 60 60"><path d="M55 24 A27 27 0 1 0 56 36" fill="none" stroke="#2E3440" stroke-width="4.3" stroke-linecap="round"/><path d="M30 17 V31 H41" fill="none" stroke="#2E3440" stroke-width="4.3" stroke-linecap="round" stroke-linejoin="round"/><path d="M47 31 H58" stroke="#2E3440" stroke-width="4.3" stroke-linecap="round"/></svg>
<svg style="left:592.65px;top:140.85px;" width="6.90" height="6.90" viewBox="0 0 60 60"><circle cx="30" cy="30" r="27" fill="none" stroke="#2E3440" stroke-width="4.3"/><path d="M30 16 V30 L38 38" fill="none" stroke="#2E3440" stroke-width="4.3" stroke-linecap="round" stroke-linejoin="round"/></svg>
<svg style="left:611.60px;top:141.60px;" width="6.60" height="5.40" viewBox="0 0 62 52"><g fill="#2E3440"><rect x="0" y="1" width="10" height="10" rx="2"/><rect x="0" y="21" width="10" height="10" rx="2"/><rect x="0" y="41" width="10" height="10" rx="2"/><rect x="18" y="2.5" width="44" height="7" rx="2"/><rect x="18" y="22.5" width="44" height="7" rx="2"/><rect x="18" y="42.5" width="44" height="7" rx="2"/></g></svg>
<svg style="left:633.00px;top:141.60px;" width="5.60" height="5.80" viewBox="0 0 56 58"><circle cx="26" cy="26" r="21" fill="none" stroke="#3A404C" stroke-width="5"/><path d="M42 43 L52 54" stroke="#3A404C" stroke-width="5" stroke-linecap="round"/></svg>
</div></div>
</body></html>
